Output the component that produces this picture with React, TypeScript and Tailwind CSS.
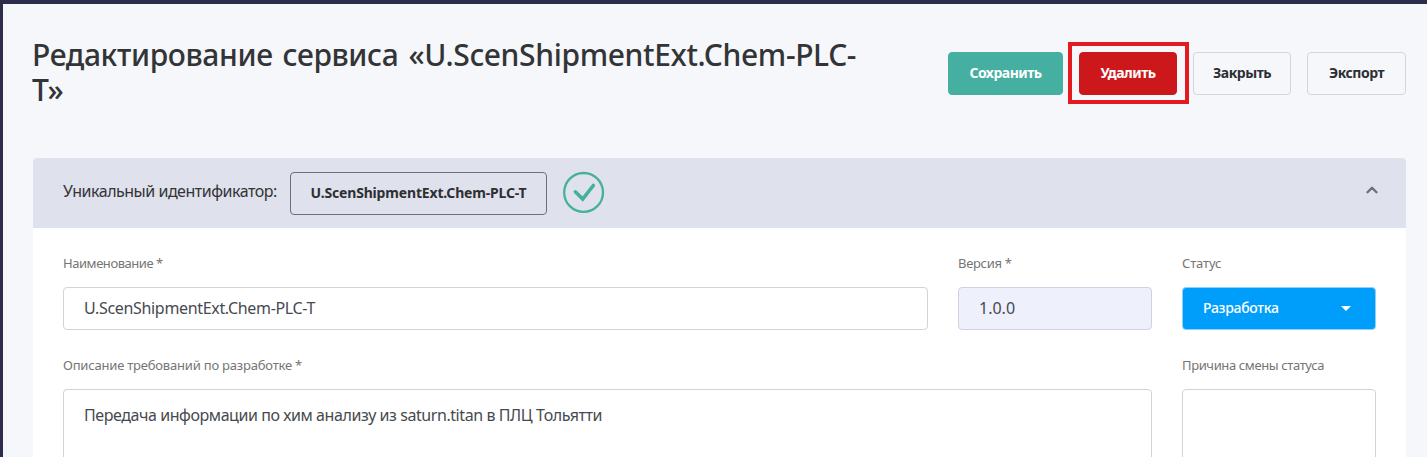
import { ChevronUp } from "lucide-react";
import type { ReactNode } from "react";
import { twMerge } from "tailwind-merge";

const Button = ({
  children,
  className,
}: {
  children: ReactNode;
  className?: string;
}) => (
  <button
    type="button"
    className={twMerge(
      "h-[43px] shrink-0 rounded border border-[#d3d6db] pb-px text-sm font-bold tracking-[-0.5px] text-[#2d2f33]",
      className
    )}
  >
    {children}
  </button>
);

const Field = ({
  label,
  className,
  labelClassName,
  children,
}: {
  label: string;
  className?: string;
  labelClassName?: string;
  children: ReactNode;
}) => (
  <div className={twMerge("flex flex-col", className)}>
    <span
      className={twMerge(
        "mb-[14px] h-5 text-[13px] leading-5 tracking-[-0.45px] text-[#757575]",
        labelClassName
      )}
    >
      {label}
    </span>
    {children}
  </div>
);

const CheckCircle = () => (
  <svg
    viewBox="0 0 42 42"
    fill="none"
    stroke="#45b09c"
    className="mb-0.5 ml-4 size-[42px]"
  >
    <circle cx="20.6" cy="21.4" r="19.4" strokeWidth="2.3" />
    <path
      d="M12.3 20.8 19.7 28.1 30.3 14.5"
      strokeWidth="3.6"
      strokeLinecap="round"
    />
  </svg>
);

const Header = () => (
  <header className="flex h-[154px] items-start justify-between">
    <h1 className="-ml-px mt-[33px] w-[851px] text-[30px] font-medium leading-[35px] tracking-[-0.36px] text-[#323436] [word-spacing:2.5px]">
      Редактирование сервиса «U.ScenShipmentExt.Chem-PLC-T»
    </h1>
    <div className="mt-12 flex gap-4">
      <Button className="w-[115px] border-[#45afa2] bg-[#45afa2] text-white">
        Сохранить
      </Button>
      <div className="relative">
        <Button className="w-[98px] border-[#cc181b] bg-[#cc181b] text-white">
          Удалить
        </Button>
        <div className="pointer-events-none absolute -left-[11px] -top-[10px] h-[62px] w-[121px] border-4 border-[#e31b20]" />
      </div>
      <Button className="w-[98px]">Закрыть</Button>
      <Button className="w-[99px]">Экспорт</Button>
    </div>
  </header>
);

const PanelHeader = () => (
  <div className="flex h-[70px] items-center rounded-t bg-[#dfe1ec] px-[30px]">
    <span className="w-[227px] whitespace-nowrap pb-1 text-base tracking-[-0.48px] text-[#323436]">
      Уникальный идентификатор:
    </span>
    <Button className="w-[257px] border-[#6c6f7e] tracking-[-0.17px]">
      U.ScenShipmentExt.Chem-PLC-T
    </Button>
    <CheckCircle />
    <ChevronUp
      className="mb-1.5 ml-auto -mr-[5px] size-[18px] text-[#6c6f7e]"
      strokeWidth={3.2}
    />
  </div>
);

export default function App() {
  return (
    <div className="h-[457px] overflow-hidden border-l-[3px] border-t-4 border-[#2c2d4b] bg-[#f5f7fb] pl-[30px] pr-[21px] font-['Noto_Sans','Open_Sans',sans-serif]">
      <Header />
      <section className="rounded-t bg-white">
        <PanelHeader />
        <div className="grid grid-cols-[865px_194px_194px] gap-x-[30px] px-[30px] pt-[25px]">
          <Field label="Наименование *">
            <div className="h-[43px] rounded border border-[#d3d3d6] px-5 text-base leading-[41px] tracking-[-0.33px] text-[#464a50]">
              U.ScenShipmentExt.Chem-PLC-T
            </div>
          </Field>
          <Field label="Версия *" labelClassName="tracking-[-0.3px]">
            <div className="h-[43px] rounded border border-[#d0d2e0] bg-[#eef0fc] px-5 text-base leading-[41px] text-[#464a50]">
              1.0.0
            </div>
          </Field>
          <Field label="Статус" labelClassName="tracking-[-0.15px]">
            <div className="flex h-[43px] items-center justify-between rounded border border-[#8fd0fb] bg-[#009efb] pl-5 pr-6 text-sm font-medium tracking-[-0.3px] text-white">
              <span className="pb-0.5">Разработка</span>
              <span className="border-x-[5px] border-t-[5px] border-x-transparent border-t-white" />
            </div>
          </Field>
          <Field
            label="Описание требований по разработке *"
            className="col-span-2 mt-[25px]"
            labelClassName="tracking-[-0.2px]"
          >
            <div className="h-[120px] rounded border border-[#d3d3d6] px-5 pt-[13px] text-base tracking-[-0.43px] text-[#464a50]">
              Передача информации по хим анализу из saturn.titan в ПЛЦ Тольятти
            </div>
          </Field>
          <Field
            label="Причина смены статуса"
            className="mt-[25px]"
            labelClassName="tracking-[-0.38px]"
          >
            <div className="h-[120px] rounded border border-[#d3d3d6]" />
          </Field>
        </div>
      </section>
    </div>
  );
}
